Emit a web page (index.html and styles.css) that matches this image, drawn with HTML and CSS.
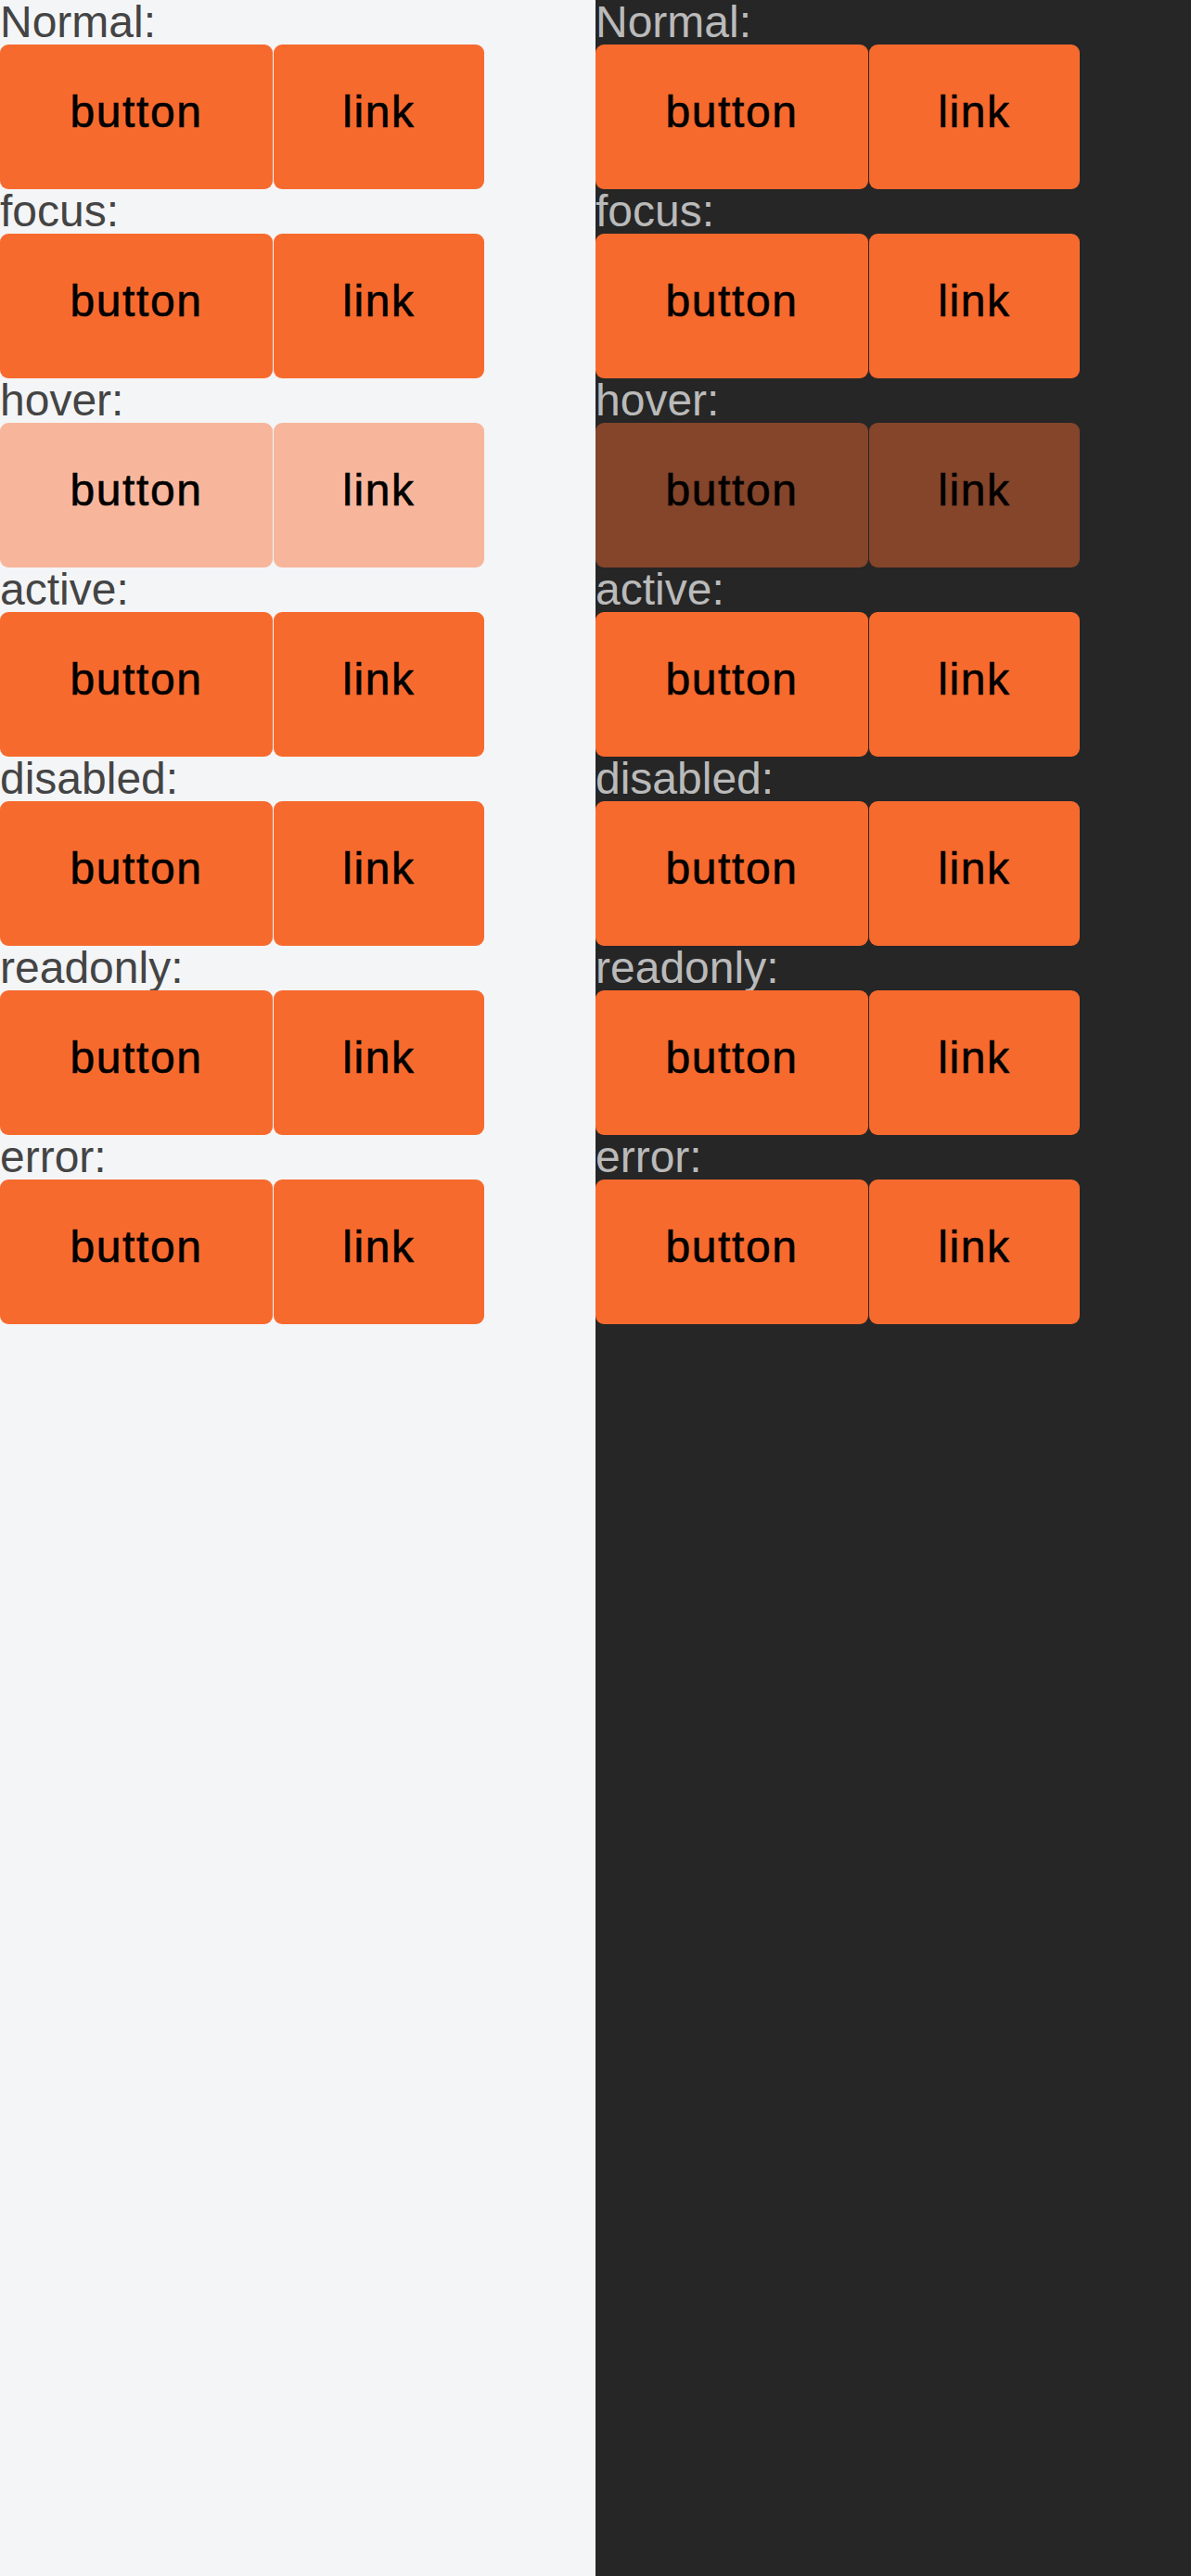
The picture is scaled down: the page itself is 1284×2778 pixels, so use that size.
FILE: index.html
```html
<!DOCTYPE html>
<html>
<head>
<meta charset="utf-8">
<link rel="stylesheet" href="styles.css">
</head>
<body>
<div class="page">
  <section class="panel light">
    <div class="state"><div class="label">Normal:</div><div class="pair"><button class="btn">button</button><a class="btn link" href="#">link</a></div></div>
    <div class="state"><div class="label">focus:</div><div class="pair"><button class="btn">button</button><a class="btn link" href="#">link</a></div></div>
    <div class="state"><div class="label">hover:</div><div class="pair"><button class="btn hover">button</button><a class="btn link hover" href="#">link</a></div></div>
    <div class="state"><div class="label">active:</div><div class="pair"><button class="btn">button</button><a class="btn link" href="#">link</a></div></div>
    <div class="state"><div class="label">disabled:</div><div class="pair"><button class="btn">button</button><a class="btn link" href="#">link</a></div></div>
    <div class="state"><div class="label">readonly:</div><div class="pair"><button class="btn">button</button><a class="btn link" href="#">link</a></div></div>
    <div class="state"><div class="label">error:</div><div class="pair"><button class="btn">button</button><a class="btn link" href="#">link</a></div></div>
  </section>
  <section class="panel dark">
    <div class="state"><div class="label">Normal:</div><div class="pair"><button class="btn">button</button><a class="btn link" href="#">link</a></div></div>
    <div class="state"><div class="label">focus:</div><div class="pair"><button class="btn">button</button><a class="btn link" href="#">link</a></div></div>
    <div class="state"><div class="label">hover:</div><div class="pair"><button class="btn hover">button</button><a class="btn link hover" href="#">link</a></div></div>
    <div class="state"><div class="label">active:</div><div class="pair"><button class="btn">button</button><a class="btn link" href="#">link</a></div></div>
    <div class="state"><div class="label">disabled:</div><div class="pair"><button class="btn">button</button><a class="btn link" href="#">link</a></div></div>
    <div class="state"><div class="label">readonly:</div><div class="pair"><button class="btn">button</button><a class="btn link" href="#">link</a></div></div>
    <div class="state"><div class="label">error:</div><div class="pair"><button class="btn">button</button><a class="btn link" href="#">link</a></div></div>
  </section>
</div>
</body>
</html>
```
FILE: styles.css
```css
html, body {
  margin: 0;
  padding: 0;
}
body {
  font-family: "Liberation Sans", Arial, sans-serif;
}
.page {
  display: grid;
  grid-template-columns: 642px 642px;
  min-height: 2778px;
}
.panel {
  display: flex;
  flex-direction: column;
}
.light {
  background: #f4f5f7;
  color: #444444;
}
.dark {
  background: #262626;
  color: #bababa;
}
.label {
  font-size: 48px;
  line-height: 48px;
  height: 48px;
  white-space: nowrap;
}
.pair {
  display: flex;
  gap: 1px;
}
.btn {
  box-sizing: border-box;
  display: block;
  flex: none;
  width: 294px;
  height: 156px;
  margin: 0;
  border: 0;
  border-radius: 9px;
  background: #f76a2e;
  color: #000;
  font-family: "Liberation Sans", Arial, sans-serif;
  font-size: 48px;
  line-height: 48px;
  letter-spacing: 1.6px;
  -webkit-text-stroke: 0.6px #000;
  padding: 49px 0 59px;
  text-align: center;
  text-decoration: none;
}
.link {
  width: 227px;
}
.light .hover {
  background: #f7b69b;
}
.dark .hover {
  background: #84452a;
}
```
